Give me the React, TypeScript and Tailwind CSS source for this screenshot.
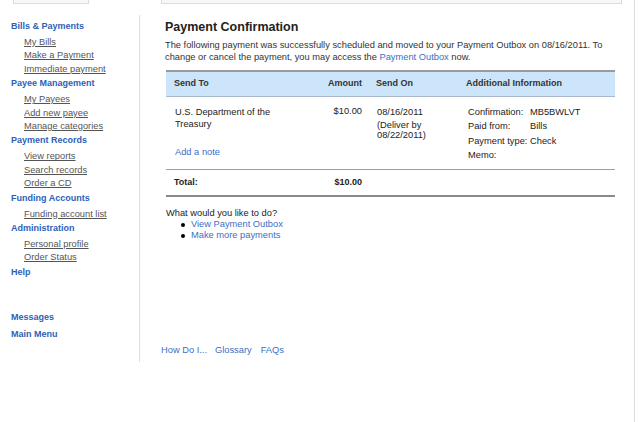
const NAV = [
  { title: "Bills & Payments", items: ["My Bills", "Make a Payment", "Immediate payment"] },
  { title: "Payee Management", items: ["My Payees", "Add new payee", "Manage categories"] },
  { title: "Payment Records", items: ["View reports", "Search records", "Order a CD"] },
  { title: "Funding Accounts", items: ["Funding account list"] },
  { title: "Administration", items: ["Personal profile", "Order Status"] },
  { title: "Help", items: [] as string[] },
];

const INFO = [
  ["Confirmation:", "MB5BWLVT"],
  ["Paid from:", "Bills"],
  ["Payment type:", "Check"],
  ["Memo:", ""],
];

function Sidebar() {
  return (
    <div className="mt-[11px] h-[347px] w-[140px] shrink-0 border-r border-[#dedede] pt-[4px]">
      {NAV.map((g) => (
        <div key={g.title}>
          <div className="pl-[11px] text-[9px] font-bold leading-[14px] text-[#2c5fb8]">{g.title}</div>
          {g.items.length > 0 && (
            <div className="mt-[3px] pl-[24px]">
              {g.items.map((it) => (
                <div key={it} className="text-[9.3px] leading-[13.4px] text-[#555] underline">
                  {it}
                </div>
              ))}
            </div>
          )}
        </div>
      ))}
      <div className="mt-[31px] pl-[11px] text-[9px] font-bold leading-[14px] text-[#2c5fb8]">Messages</div>
      <div className="mt-[3px] pl-[11px] text-[9px] font-bold leading-[14px] text-[#2c5fb8]">Main Menu</div>
    </div>
  );
}

function PaymentTable() {
  return (
    <div className="mt-[7px] ml-px w-[449px] text-[9.3px] text-[#222]">
      {/* header */}
      <div className="grid h-[27px] grid-cols-[156px_40px_104px_149px] items-center border-t-2 border-b border-t-[#9a9a9a] border-b-[#a8b8c8] bg-[#cde5fa] text-[9px] font-bold text-[#333]">
        <div className="pl-2">Send To</div>
        <div className="text-right">Amount</div>
        <div className="pl-[14px]">Send On</div>
        <div>Additional Information</div>
      </div>
      {/* payment row */}
      <div className="grid grid-cols-[156px_40px_104px_149px] border-b border-[#a0a0a0] pt-[8px] pb-[7px] leading-[12px]">
        <div className="flex flex-col pt-[1px] pl-[9px]">
          <div>U.S. Department of the</div>
          <div>Treasury</div>
          <div className="mt-[16px] text-[#3a6fc6]">Add a note</div>
        </div>
        <div className="text-right">$10.00</div>
        <div className="pt-[1px] pl-[15px]">
          <div>08/16/2011</div>
          <div className="mt-[2px] leading-[10px]">(Deliver by</div>
          <div className="leading-[10px]">08/22/2011)</div>
        </div>
        <div className="pl-[2px]">
          {INFO.map(([k, v]) => (
            <div key={k} className="flex leading-[14.3px]">
              <span className="w-[62px] shrink-0">{k}</span>
              <span>{v}</span>
            </div>
          ))}
        </div>
      </div>
      {/* total */}
      <div className="grid h-[27px] grid-cols-[156px_40px_104px_149px] items-center border-b-2 border-[#8a8a8a] text-[9px] font-bold">
        <div className="pl-2">Total:</div>
        <div className="text-right">$10.00</div>
        <div />
        <div />
      </div>
    </div>
  );
}

export default function App() {
  return (
    <div className="h-[422px] w-[639px] bg-white font-['Liberation_Sans',Arial,sans-serif]">
      <div className="flex h-full w-[635px] flex-col border-r border-[#dcdcdc]">
        {/* cut-off boxes at the top */}
        <div className="flex h-[4px] shrink-0">
          <div className="ml-[13px] w-[76px] border-x border-b border-[#dcdcdc] bg-[#f7f7f7]" />
          <div className="ml-[72px] w-[461px] border-x border-b border-[#dcdcdc] bg-[#f7f7f7]" />
        </div>
        <div className="flex">
          <Sidebar />
          <div className="flex flex-col">
            <div className="ml-[25px]">
              <h1 className="mt-[15px] text-[12.5px] font-bold leading-[16px] text-[#222]">Payment Confirmation</h1>
              <p className="mt-[4px] w-[457px] text-[9.3px] leading-[12px] text-[#333]">
                The following payment was successfully scheduled and moved to your Payment Outbox on 08/16/2011. To
                change or cancel the payment, you may access the <a className="text-[#3a6fc6]">Payment Outbox</a> now.
              </p>
              <PaymentTable />
              <div className="mt-[11px] ml-[1px] text-[9.3px] leading-[11px] text-[#222]">
                <div>What would you like to do?</div>
                {["View Payment Outbox", "Make more payments"].map((l) => (
                  <div key={l} className="flex items-center pl-[15px]">
                    <span className="h-[4px] w-[4px] rounded-full bg-black" />
                    <span className="ml-[6px] text-[#3a6fc6]">{l}</span>
                  </div>
                ))}
              </div>
            </div>
            <div className="mt-[104px] ml-[21px] flex text-[9.3px] leading-[11px] text-[#3a6fc6]">
              <span>How Do I...</span>
              <span className="ml-[8px]">Glossary</span>
              <span className="ml-[9px]">FAQs</span>
            </div>
          </div>
        </div>
      </div>
    </div>
  );
}
